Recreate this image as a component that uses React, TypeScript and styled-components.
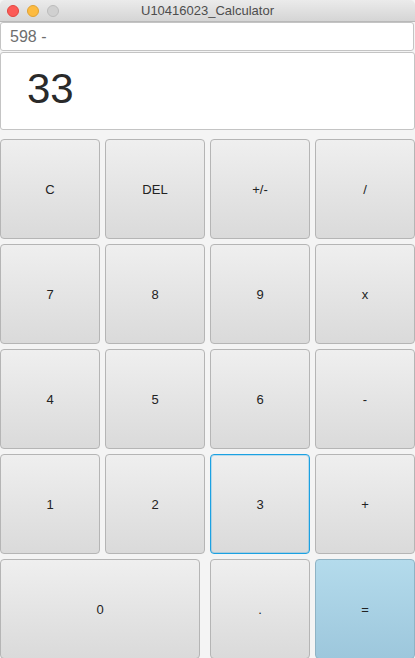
import styled, { createGlobalStyle } from 'styled-components';

const GlobalStyle = createGlobalStyle`
  html, body {
    margin: 0;
    padding: 0;
    background: #f4f4f4;
  }
  * {
    box-sizing: border-box;
  }
`;

const Window = styled.div`
  width: 415px;
  height: 658px;
  overflow: hidden;
  display: flex;
  flex-direction: column;
  background: #f4f4f4;
  font-family: 'Liberation Sans', Arial, sans-serif;
`;

const TitleBar = styled.div`
  height: 22px;
  flex: none;
  position: relative;
  display: flex;
  align-items: center;
  justify-content: center;
  background: linear-gradient(#ebebeb, #d5d5d5);
  border-bottom: 1px solid #b9b9b9;
  border-radius: 5px 5px 0 0;
`;

const Lights = styled.div`
  position: absolute;
  left: 7px;
  top: 5px;
  display: flex;
  gap: 8px;
`;

const Light = styled.span<{ $color: string; $edge: string }>`
  width: 12px;
  height: 12px;
  border-radius: 50%;
  background: ${(p) => p.$color};
  border: 1px solid ${(p) => p.$edge};
`;

const Title = styled.span`
  font-size: 13px;
  color: #4d4d4d;
  font-family: 'Liberation Sans', Arial, sans-serif;
`;

const Expression = styled.div`
  height: 29px;
  flex: none;
  margin: 0 1px 0 0;
  padding: 0 9px;
  display: flex;
  align-items: center;
  background: #fff;
  border: 1px solid #c4c4c4;
  border-radius: 3px;
  font-size: 16px;
  color: #6e6e6e;
`;

const Display = styled.div`
  height: 78px;
  flex: none;
  margin: 1px 0 9px;
  padding: 0 26px 4px;
  display: flex;
  align-items: center;
  background: #fff;
  border: 1px solid #c4c4c4;
  border-radius: 3px;
  font-size: 42px;
  color: #2a2a2a;
`;

const Keypad = styled.div`
  display: grid;
  grid-template-columns: repeat(4, 100px);
  grid-auto-rows: 100px;
  gap: 5px;
`;

const Key = styled.button<{ $wide?: boolean; $focus?: boolean; $accent?: boolean }>`
  grid-column: ${(p) => (p.$wide ? 'span 2' : 'auto')};
  margin: 0;
  padding: 0;
  font-family: 'Liberation Sans', Arial, sans-serif;
  font-size: 13px;
  color: #222;
  border-radius: 4px;
  border: 1px solid ${(p) => (p.$focus ? '#1ba1e2' : p.$accent ? '#8fb3c4' : '#b5b5b5')};
  background: ${(p) =>
    p.$accent
      ? 'linear-gradient(#b4dbec, #9dc7dc)'
      : 'linear-gradient(#efefef, #dadada)'};
  box-shadow: ${(p) => (p.$focus ? 'inset 0 0 0 1px rgba(27,161,226,0.25)' : 'none')};
  ${(p) => (p.$wide ? 'width: 200px;' : '')}
`;

const rows = [
  ['C', 'DEL', '+/-', '/'],
  ['7', '8', '9', 'x'],
  ['4', '5', '6', '-'],
  ['1', '2', '3', '+'],
];

export default function App() {
  return (
    <>
      <GlobalStyle />
      <Window>
        <TitleBar>
          <Lights>
            <Light $color="#fc5b57" $edge="#e2463f" />
            <Light $color="#fdbb40" $edge="#e0a233" />
            <Light $color="#d0d0d0" $edge="#bcbcbc" />
          </Lights>
          <Title>U10416023_Calculator</Title>
        </TitleBar>
        <Expression>598 -</Expression>
        <Display>33</Display>
        <Keypad>
          {rows.flat().map((k) => (
            <Key key={k} $focus={k === '3'}>
              {k}
            </Key>
          ))}
          <Key $wide>0</Key>
          <Key>.</Key>
          <Key $accent>=</Key>
        </Keypad>
      </Window>
    </>
  );
}
